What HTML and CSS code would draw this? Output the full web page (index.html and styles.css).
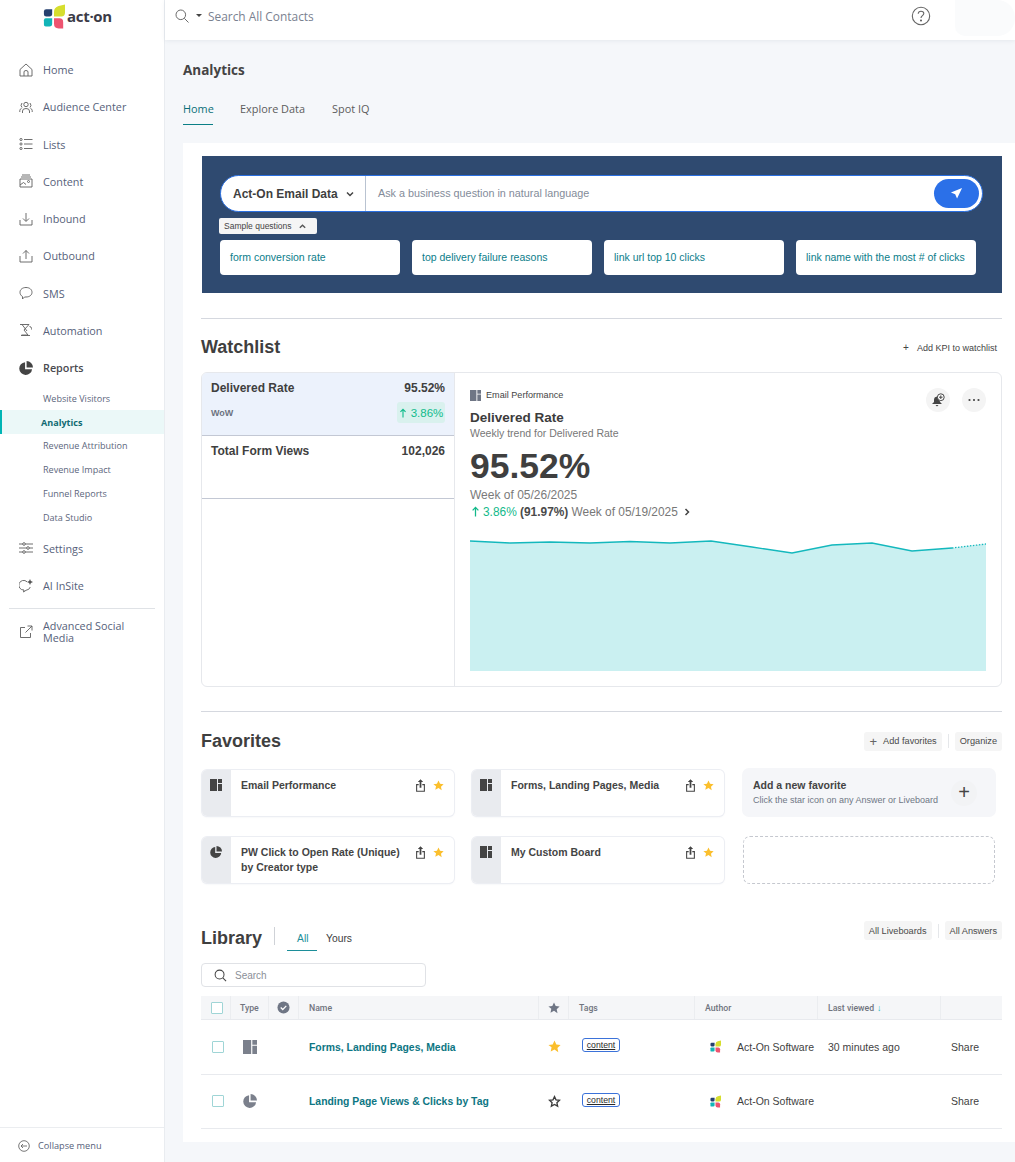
FILE: index.html
```html
<!DOCTYPE html>
<html lang="en">
<head>
<meta charset="utf-8">
<title>Analytics</title>
<link rel="stylesheet" href="styles.css">
</head>
<body>
<svg class="defs" width="0" height="0" aria-hidden="true">
  <symbol id="logo" viewBox="0 0 24 26">
    <path fill="#26406f" d="M1 7.500Q1 5 3.500 5H10v5q0 3-3 3H3.500Q1 13 1 10.500z"/>
    <path fill="#12b5b8" d="M3 15h7v6q0 3-3 3H3q-2 0-2-2v-5q0-2 2-2z"/>
    <path fill="#d6de2e" d="M24 0v9q0 4-4 4h-8V8q0-5 5-6.500z"/>
    <path fill="#ee5470" d="M12 15h6q4 0 4 4v7h-5q-5 0-5-5z"/>
  </symbol>
  <symbol id="board" viewBox="0 0 12 12">
    <path fill="currentColor" d="M0 0h7v12H0zM8 0h4v4H8zM8 5h4v7H8z"/>
  </symbol>
  <symbol id="pie" viewBox="0 0 12 12">
    <path fill="currentColor" d="M5.200 1v6h6A5.500 5.500 0 1 1 5.200 1zM6.500 0a5.500 5.500 0 0 1 5.500 5.500H6.500z"/>
  </symbol>
  <symbol id="star" viewBox="0 0 12 12">
    <path fill="currentColor" d="M6 .5l1.700 3.600 3.900.5-2.900 2.700.8 3.900L6 8.800l-3.500 1.900.8-3.900L.4 4.600l3.900-.5z"/>
  </symbol>
  <symbol id="share" viewBox="0 0 10 14">
    <path fill="none" stroke="currentColor" stroke-width="1.200" d="M3 6H.7v7.300h8.600V6H7"/>
    <path fill="currentColor" d="M5 0l3 3.200H6V9.500H4V3.200H2z"/>
  </symbol>
  <symbol id="chev" viewBox="0 0 10 10">
    <path fill="none" stroke="currentColor" stroke-width="1.500" d="M2 3.500l3 3 3-3"/>
  </symbol>
  <symbol id="uparrow" viewBox="0 0 10 12">
    <path fill="none" stroke="currentColor" stroke-width="1.400" d="M5 11.500V1.500M1.800 4.700L5 1.500l3.200 3.200"/>
  </symbol>
</svg>

<div class="app">
  <aside class="sidebar">
    <div class="brand">
      <svg class="brand-mark"><use href="#logo"/></svg>
      <span class="brand-text">act·on</span>
    </div>
    <nav class="nav">
      <a class="nav-item"><svg class="nav-icon" viewBox="0 0 14 14"><path d="M1 6.500L7 1l6 5.500V13H1zM5 13V9q0-1.500 2-1.500T9 9v4"/></svg>Home</a>
      <a class="nav-item"><svg class="nav-icon" viewBox="0 0 14 14"><circle cx="7" cy="4.500" r="2.200"/><path d="M3.500 13v-2q0-2.500 3.500-2.500t3.500 2.500v2M3 7.500Q1 5.500 3 3M11 7.500q2-2 0-4.500M.8 12v-1.500Q.8 9 2.500 8.500M13.200 12v-1.500Q13.200 9 11.500 8.500"/></svg>Audience Center</a>
      <a class="nav-item"><svg class="nav-icon" viewBox="0 0 14 14"><circle cx="2" cy="2.500" r="1.100"/><circle cx="2" cy="7" r="1.100"/><circle cx="2" cy="11.500" r="1.100"/><path d="M5 2.500h8.500M5 7h8.500M5 11.500h8.500"/></svg>Lists</a>
      <a class="nav-item"><svg class="nav-icon" viewBox="0 0 14 14"><path d="M3 1h8M2 3h10M1 5h12v8H1zM1 11l3.500-2.500L7 10.500"/><circle cx="9.500" cy="7.500" r="1"/></svg>Content</a>
      <a class="nav-item"><svg class="nav-icon" viewBox="0 0 14 14"><path d="M1 8v5h12V8M7 1v8M4 6.500L7 9.500l3-3"/></svg>Inbound</a>
      <a class="nav-item"><svg class="nav-icon" viewBox="0 0 14 14"><path d="M1 7v6h12V7M7 10V1.500M4 4.500l3-3 3 3"/></svg>Outbound</a>
      <a class="nav-item"><svg class="nav-icon" viewBox="0 0 14 14"><path d="M7 1.500c3.500 0 6 2 6 4.800S10.500 11 7 11H5.500L3.500 13v-2.500C2 9.700 1 8.200 1 6.300 1 3.500 3.500 1.500 7 1.500z"/></svg>SMS</a>
      <a class="nav-item"><svg class="nav-icon" viewBox="0 0 14 14"><path d="M1 1.500h9L5 7l4 5H2.500M3 1.500L8 8M2 12.500h9M10.500 3.500q2 0 2 2v1"/></svg>Automation</a>
      <a class="nav-item nav-strong"><svg class="nav-icon nav-solid" viewBox="0 0 12 12"><use href="#pie"/></svg>Reports</a>
      <div class="subnav">
        <a class="sub-item">Website Visitors</a>
        <a class="sub-item sub-active">Analytics</a>
        <a class="sub-item">Revenue Attribution</a>
        <a class="sub-item">Revenue Impact</a>
        <a class="sub-item">Funnel Reports</a>
        <a class="sub-item">Data Studio</a>
      </div>
      <a class="nav-item"><svg class="nav-icon" viewBox="0 0 14 14"><path d="M0 3h14M0 7h14M0 11h14"/><circle class="knob" cx="5" cy="3" r="1.300"/><circle class="knob" cx="9" cy="7" r="1.300"/><circle class="knob" cx="5" cy="11" r="1.300"/></svg>Settings</a>
      <a class="nav-item"><svg class="nav-icon" viewBox="0 0 14 14"><path d="M8 2.800A4.800 4.800 0 1 0 5 11l-.5 2L7 11.300q3.500-.5 4.300-3.300"/><path class="filled" d="M11 0l.9 2.100L14 3l-2.100.9L11 6l-.9-2.100L8 3l2.100-.9z"/></svg>AI InSite</a>
      <div class="nav-rule"></div>
      <a class="nav-item nav-wrap"><svg class="nav-icon" viewBox="0 0 14 14"><path d="M6 2.500H1.500v10h10V8M8.500 1H13v4.500M13 1L6.500 7.500"/></svg><span>Advanced Social Media</span></a>
    </nav>
    <div class="collapse">
      <svg class="collapse-icon" viewBox="0 0 12 12"><circle cx="6" cy="6" r="5.300"/><path d="M9 6H3.200M5 4L3 6l2 2"/></svg>
      Collapse menu
    </div>
  </aside>

  <div class="main">
    <header class="topbar">
      <svg class="top-search" viewBox="0 0 14 14"><circle cx="5.800" cy="5.800" r="4.800"/><path d="M9.300 9.300L13.500 13.500"/></svg>
      <span class="caret"></span>
      <span class="top-placeholder">Search All Contacts</span>
      <svg class="help" viewBox="0 0 20 20"><circle cx="10" cy="10" r="8.700"/><path d="M7.200 7.800Q7.400 5.300 10 5.300q2.800 0 2.800 2.300c0 2-2.800 2.200-2.800 4.400"/><circle class="filled" cx="10" cy="14.500" r="1"/></svg>
      <div class="avatar"></div>
    </header>

    <div class="page-head">
      <h1 class="page-title">Analytics</h1>
      <div class="page-tabs">
        <a class="page-tab page-tab-active">Home</a>
        <a class="page-tab">Explore Data</a>
        <a class="page-tab">Spot IQ</a>
      </div>
    </div>

    <main class="card">
      <section class="hero">
        <div class="pill">
          <div class="pill-source">Act-On Email Data <svg class="pill-chev"><use href="#chev"/></svg></div>
          <div class="pill-input">Ask a business question in natural language</div>
          <div class="send"><svg viewBox="0 0 14 14" class="send-icon"><path d="M13 1L1 5.800l4.600 2 2 4.700z"/></svg></div>
        </div>
        <div class="sample-toggle">Sample questions <svg class="sample-chev"><use href="#chev"/></svg></div>
        <div class="chips">
          <a class="chip">form conversion rate</a>
          <a class="chip">top delivery failure reasons</a>
          <a class="chip">link url top 10 clicks</a>
          <a class="chip">link name with the most # of clicks</a>
        </div>
      </section>

      <div class="rule rule-first"></div>
      <div class="sec-head">
        <h2 class="sec-title">Watchlist</h2>
        <a class="kpi-add"><span class="kpi-plus">+</span>Add KPI to watchlist</a>
      </div>

      <section class="watch">
        <div class="watch-list">
          <div class="kpi kpi-active">
            <div class="kpi-row"><span>Delivered Rate</span><span>95.52%</span></div>
            <div class="kpi-sub"><span class="wow">WoW</span><span class="badge"><svg class="badge-arrow"><use href="#uparrow"/></svg>3.86%</span></div>
          </div>
          <div class="kpi">
            <div class="kpi-row"><span>Total Form Views</span><span>102,026</span></div>
          </div>
        </div>
        <div class="watch-detail">
          <div class="detail-actions">
            <span class="round"><svg viewBox="0 0 14 14" class="round-icon"><path class="filled" d="M6 3.500a3.500 3.500 0 0 0-3 3.500v2L1 11h10L9.500 9.500"/><circle class="bell-badge" cx="9.800" cy="4.200" r="3.400"/><path class="plus" d="M9.800 2.400v3.600M8 4.200h3.600"/><path class="filled" d="M4.500 12h3L6 13.500z"/></svg></span>
            <span class="round"><svg viewBox="0 0 14 14" class="round-icon"><circle class="filled" cx="2.500" cy="7" r="1.100"/><circle class="filled" cx="7" cy="7" r="1.100"/><circle class="filled" cx="11.500" cy="7" r="1.100"/></svg></span>
          </div>
          <div class="board-line"><svg class="board-ic"><use href="#board"/></svg>Email Performance</div>
          <div class="detail-title">Delivered Rate</div>
          <div class="detail-sub">Weekly trend for Delivered Rate</div>
          <div class="detail-num">95.52%</div>
          <div class="detail-week">Week of 05/26/2025</div>
          <div class="detail-cmp"><svg class="cmp-arrow"><use href="#uparrow"/></svg><span class="up">3.86%</span> <b>(91.97%)</b> Week of 05/19/2025 <svg class="cmp-chev"><use href="#chev"/></svg></div>
          <svg class="chart" viewBox="0 0 516 131" preserveAspectRatio="none">
            <path fill="#caf0f1" d="M0 1L40 3 80 2 120 3 160 1.500 200 3 241 1 282 7 322 13 362 5 402 3 442 11 482 8 516 4V131H0z"/>
            <path fill="none" stroke="#14b8bd" stroke-width="1.300" d="M0 1L40 3 80 2 120 3 160 1.500 200 3 241 1 282 7 322 13 362 5 402 3 442 11 482 8"/>
            <path fill="none" stroke="#14b8bd" stroke-width="1.300" stroke-dasharray="1.500 1.500" d="M482 8L516 4"/>
          </svg>
        </div>
      </section>

      <div class="rule rule-second"></div>
      <div class="sec-head fav-head">
        <h2 class="sec-title">Favorites</h2>
        <div class="btn-group">
          <a class="soft-btn"><span class="btn-plus">+</span>Add favorites</a>
          <span class="btn-sep"></span>
          <a class="soft-btn">Organize</a>
        </div>
      </div>

      <section class="fav-grid">
        <article class="fav">
          <div class="fav-side"><svg class="fav-type"><use href="#board"/></svg></div>
          <div class="fav-name">Email Performance</div>
          <svg class="fav-share"><use href="#share"/></svg><svg class="fav-star"><use href="#star"/></svg>
        </article>
        <article class="fav">
          <div class="fav-side"><svg class="fav-type"><use href="#board"/></svg></div>
          <div class="fav-name">Forms, Landing Pages, Media</div>
          <svg class="fav-share"><use href="#share"/></svg><svg class="fav-star"><use href="#star"/></svg>
        </article>
        <article class="fav-new">
          <div class="new-copy">
            <div class="new-title">Add a new favorite</div>
            <div class="new-sub">Click the star icon on any Answer or Liveboard</div>
          </div>
          <span class="new-plus">+</span>
        </article>
        <article class="fav">
          <div class="fav-side"><svg class="fav-type"><use href="#pie"/></svg></div>
          <div class="fav-name">PW Click to Open Rate (Unique) by Creator type</div>
          <svg class="fav-share"><use href="#share"/></svg><svg class="fav-star"><use href="#star"/></svg>
        </article>
        <article class="fav">
          <div class="fav-side"><svg class="fav-type"><use href="#board"/></svg></div>
          <div class="fav-name">My Custom Board</div>
          <svg class="fav-share"><use href="#share"/></svg><svg class="fav-star"><use href="#star"/></svg>
        </article>
        <div class="fav-empty"></div>
      </section>

      <div class="lib-head">
        <h2 class="sec-title lib-title">Library</h2>
        <span class="lib-sep"></span>
        <div class="lib-tabs">
          <a class="lib-tab lib-tab-active">All</a>
          <a class="lib-tab">Yours</a>
        </div>
        <div class="btn-group lib-btns">
          <a class="soft-btn">All Liveboards</a>
          <span class="btn-sep"></span>
          <a class="soft-btn">All Answers</a>
        </div>
      </div>

      <div class="lib-search">
        <svg class="lib-search-ic" viewBox="0 0 14 14"><circle cx="6" cy="6" r="4.800"/><path d="M9.500 9.500L13 13"/></svg>
        Search
      </div>

      <section class="table">
        <div class="tr th">
          <div class="td"><span class="check check-head"></span></div>
          <div class="td td-l td-type">Type</div>
          <div class="td"><svg class="verified" viewBox="0 0 14 14"><circle cx="7" cy="7" r="6.500"/><path d="M4 7l2.200 2.200L10 5.300"/></svg></div>
          <div class="td td-l">Name</div>
          <div class="td"><svg class="head-star"><use href="#star"/></svg></div>
          <div class="td td-l">Tags</div>
          <div class="td td-l">Author</div>
          <div class="td td-l">Last viewed <span class="sort">↓</span></div>
          <div class="td"></div>
        </div>
        <div class="tr row">
          <div class="td"><span class="check"></span></div>
          <div class="td"><svg class="row-type"><use href="#board"/></svg></div>
          <div class="td"></div>
          <div class="td td-l row-name">Forms, Landing Pages, Media</div>
          <div class="td"><svg class="row-star"><use href="#star"/></svg></div>
          <div class="td td-l"><a class="tag">content</a></div>
          <div class="td td-author"><svg class="author-logo"><use href="#logo"/></svg>Act-On Software</div>
          <div class="td td-l">30 minutes ago</div>
          <div class="td td-l">Share</div>
        </div>
        <div class="tr row">
          <div class="td"><span class="check"></span></div>
          <div class="td"><svg class="row-type"><use href="#pie"/></svg></div>
          <div class="td"></div>
          <div class="td td-l row-name">Landing Page Views &amp; Clicks by Tag</div>
          <div class="td"><svg class="row-star row-star-off" viewBox="0 0 12 12"><path d="M6 1.500l1.400 3 3.200.4-2.400 2.200.7 3.200L6 8.700l-2.900 1.600.7-3.200-2.400-2.200 3.200-.4z"/></svg></div>
          <div class="td td-l"><a class="tag">content</a></div>
          <div class="td td-author"><svg class="author-logo"><use href="#logo"/></svg>Act-On Software</div>
          <div class="td td-l"></div>
          <div class="td td-l">Share</div>
        </div>
      </section>
    </main>
  </div>
</div>
</body>
</html>
```

FILE: styles.css
```css
* { box-sizing: border-box; }
html, body { margin: 0; padding: 0; height: 100%; }
body {
  font-family: "Liberation Sans", Arial, sans-serif;
  color: #3c3c3c;
  background: #f5f7fa;
  overflow: hidden;
}
a { color: inherit; text-decoration: none; }
h1, h2 { margin: 0; }
.defs { position: absolute; }

.app { display: flex; min-height: 1162px; }

/* Sidebar */
.sidebar {
  width: 165px;
  flex: none;
  height: 1162px;
  background: #fff;
  border-right: 1px solid #e9ecf0;
  display: flex;
  flex-direction: column;
  font-family: "Open Sans", sans-serif;
}
.brand { height: 51px; padding: 4px 0 0 43px; display: flex; align-items: flex-start; }
.brand-mark { width: 22px; height: 25px; flex: none; }
.brand-text {
  margin: 2px 0 0 2px;
  font-family: "Open Sans", sans-serif;
  font-size: 15px;
  font-weight: 700;
  line-height: 20px;
  color: #3b3b47;
  letter-spacing: -.3px;
}
.nav { display: flex; flex-direction: column; }
.nav-item {
  height: 37.280px;
  display: flex;
  align-items: center;
  padding-left: 19px;
  font-size: 10.800px;
  color: #56617a;
}
.nav-strong { color: #4a4a50; font-weight: 600; }
.nav-icon {
  width: 14px;
  height: 14px;
  margin-right: 10px;
  flex: none;
  fill: none;
  stroke: #5d5d5d;
  stroke-width: .9;
}
.nav-solid { fill: #444; stroke: none; color: #444; }
.knob { fill: #fff; }
.filled { fill: #555; stroke: none; }
.subnav { display: flex; flex-direction: column; margin-bottom: .5px; }
.sub-item {
  height: 23.800px;
  display: flex;
  align-items: center;
  padding-left: 43px;
  font-size: 9.050px;
  color: #5c667c;
}
.sub-active {
  padding-left: 39px;
  border-left: 2px solid #00b5b5;
  background: #ebf8f8;
  color: #0f6a72;
  font-weight: 700;
}
.nav-rule { height: 1px; background: #dfe2e6; margin: 4px 9px; }
.nav-wrap { height: 38px; }
.nav-wrap span { line-height: 12px; width: 100px; }
.collapse {
  margin-top: auto;
  height: 35px;
  border-top: 1px solid #ebedf0;
  display: flex;
  align-items: center;
  padding: 1px 0 0 18px;
  font-size: 9.200px;
  color: #56617a;
}
.collapse-icon { width: 12px; height: 12px; margin-right: 8px; fill: none; stroke: #555; stroke-width: .8; }

/* Top bar */
.main { flex: 1; min-width: 0; }
.topbar {
  height: 40px;
  background: #fff;
  display: flex;
  align-items: flex-start;
  padding: 9px 0 0 10px;
  box-shadow: 0 1px 4px rgba(90, 105, 130, .1);
  font-family: "Open Sans", sans-serif;
}
.top-search { width: 14px; height: 14px; fill: none; stroke: #6b6b6b; stroke-width: 1; }
.caret {
  width: 0; height: 0;
  margin: 5px 6px 0 7px;
  border: 3px solid transparent;
  border-top: 3px solid #444;
  border-bottom: 0;
}
.top-placeholder { font-size: 11.900px; line-height: 16px; margin-top: -1px; color: #7a8190; }
.help {
  width: 20px; height: 20px;
  margin-left: auto;
  margin-top: -3px;
  fill: none;
  stroke: #666;
  stroke-width: 1.100;
}
.avatar {
  width: 60px;
  height: 36px;
  margin: -9px 0 0 24px;
  background: #fafbfc;
  border-radius: 0 22px 22px 12px;
}

/* Page head */
.page-head { padding: 21px 0 0 18px; font-family: "Open Sans", sans-serif; }
.page-title { font-size: 13.500px; font-weight: 700; line-height: 18px; color: #444; }
.page-tabs { display: flex; gap: 27px; margin-top: 21px; height: 25px; }
.page-tab { font-size: 10.900px; line-height: 18px; color: #5c5c5c; font-weight: 500; }
.page-tab-active { color: #0b6f78; border-bottom: 1.500px solid #0b7f86; padding-bottom: 6px; width: 30px; }

/* Card */
.card {
  margin: 18px 0 0 18px;
  background: #fff;
  padding: 13px 13px 13px 18px;
  height: 999px;
}
.hero {
  margin-left: 1px;
  height: 137px;
  background: #2f4a70;
  padding: 19px 18px 0;
}
.pill {
  width: 763px;
  height: 37px;
  background: #fff;
  border: 1.500px solid #2a6fe0;
  border-radius: 19px;
  display: flex;
  align-items: center;
}
.pill-source {
  width: 145px;
  height: 100%;
  padding-left: 12px;
  display: flex;
  align-items: center;
  font-size: 12px;
  font-weight: 700;
  color: #3f3f3f;
  border-right: 1px solid #b9c3d1;
}
.pill-chev { width: 10px; height: 10px; margin-left: 7px; color: #444; }
.pill-input { flex: 1; padding: 0 0 1px 12px; font-size: 10.800px; color: #838b99; }
.send {
  width: 45px;
  height: 29px;
  margin-right: 3px;
  background: #2b70e8;
  border-radius: 15px;
  display: flex;
  align-items: center;
  justify-content: center;
}
.send-icon { width: 13px; height: 13px; fill: #fff; }
.sample-toggle {
  width: 98px;
  height: 16px;
  margin: 6px 0 0 -1px;
  background: #f5f5f5;
  border-radius: 2px;
  display: flex;
  align-items: center;
  padding-left: 5px;
  font-size: 8.500px;
  color: #444;
}
.sample-chev { width: 9px; height: 9px; margin-left: 6px; transform: rotate(180deg); color: #555; }
.chips { display: flex; gap: 12px; margin-top: 6px; }
.chip {
  width: 180px;
  height: 35px;
  background: #fff;
  border-radius: 4px;
  padding: 0 0 1px 10px;
  display: flex;
  align-items: center;
  font-size: 10.500px;
  color: #0b7d8a;
}

/* Sections */
.rule { height: 1px; background: #d5d8df; }
.rule-first { margin-top: 25px; }
.rule-second { margin-top: 24px; }
.sec-head { display: flex; justify-content: space-between; align-items: center; height: 24px; margin-top: 16px; }
.sec-title { font-size: 18px; font-weight: 700; color: #3f3f3f; line-height: 24px; }
.kpi-add { font-size: 9px; color: #444; padding-right: 5px; }
.kpi-plus { margin-right: 8px; font-size: 10px; }

/* Watchlist */
.watch {
  margin-top: 13px;
  height: 315px;
  border: 1px solid #e6e8ec;
  border-radius: 6px;
  display: flex;
  overflow: hidden;
}
.watch-list { width: 253px; flex: none; border-right: 1px solid #e6e8ec; }
.kpi { height: 63px; border-bottom: 1px solid #c3c8d4; padding: 8px 9px 0; }
.kpi-active { background: #ecf2fc; }
.kpi-row { display: flex; justify-content: space-between; font-size: 12px; font-weight: 700; line-height: 14px; color: #3f3f3f; }
.kpi-sub { display: flex; justify-content: space-between; align-items: center; margin-top: 7px; }
.wow { font-size: 9px; font-weight: 700; color: #6d7380; }
.badge {
  width: 48px;
  height: 21px;
  background: #d9f1ee;
  border-radius: 3px;
  font-size: 11.500px;
  display: flex;
  align-items: center;
  justify-content: center;
  color: #10bb8c;
}
.badge-arrow { width: 8px; height: 10px; margin-right: 4px; }
.watch-detail { flex: 1; padding: 16px 15px 0; position: relative; }
.detail-actions { position: absolute; top: 15px; right: 15px; display: flex; gap: 12px; }
.round {
  width: 24px; height: 24px;
  border-radius: 50%;
  background: #f4f4f4;
  display: flex;
  align-items: center;
  justify-content: center;
}
.round-icon { width: 14px; height: 14px; fill: none; stroke: none; }
.round-icon .filled { fill: #444; }
.bell-badge { fill: #fff; stroke: #444; stroke-width: 1; }
.plus { stroke: #444; stroke-width: 1; fill: none; }
.board-line { display: flex; align-items: center; font-size: 9.100px; line-height: 12px; color: #444; }
.board-ic { width: 11px; height: 11px; margin-right: 5px; color: #6f7685; }
.detail-title { margin-top: 9px; font-size: 13.500px; font-weight: 700; line-height: 16px; color: #3c3c3c; }
.detail-sub { margin-top: 1px; font-size: 10.500px; line-height: 13px; color: #777; }
.detail-num { margin-top: 6px; font-size: 35.500px; font-weight: 700; line-height: 40px; color: #3f3f3f; }
.detail-week { margin-top: 2px; font-size: 12px; line-height: 14px; color: #7a7a7a; }
.detail-cmp { margin-top: 3px; font-size: 11.900px; line-height: 14px; color: #777; white-space: nowrap; }
.detail-cmp b { color: #4a4a4a; }
.up { color: #12b98a; }
.cmp-arrow { width: 9px; height: 11px; margin: 0 3px 0 1px; color: #12b98a; vertical-align: -1px; }
.cmp-chev { width: 10px; height: 10px; margin-left: 1px; color: #444; transform: rotate(-90deg); vertical-align: -1px; }
.chart { display: block; width: 516px; height: 131px; margin-top: 21px; }

/* Favorites */
.fav-head { margin-top: 17px; }
.btn-group { display: flex; align-items: center; }
.soft-btn {
  height: 19px;
  padding: 0 5px;
  background: #f5f5f5;
  border-radius: 3px;
  display: flex;
  align-items: center;
  font-size: 9.200px;
  color: #4a4a4a;
}
.btn-plus { font-size: 13px; margin: 0 6px 0 1px; color: #666; }
.btn-sep { width: 1px; height: 14px; background: #e5e7ea; margin: 0 6px; }
.fav-grid {
  display: grid;
  grid-template-columns: 252px 252px 252px;
  grid-auto-rows: 46px;
  column-gap: 18px;
  row-gap: 21px;
  margin: 17px 0 0 1px;
}
.fav {
  display: flex;
  align-items: flex-start;
  background: #fff;
  border-radius: 5px;
  box-shadow: 0 0 0 1px #eceef3, 0 1px 2px rgba(90, 100, 130, .12);
  overflow: hidden;
}
.fav-side {
  width: 29px;
  height: 100%;
  background: #e9ebef;
  flex: none;
  padding: 9px 0 0 8px;
}
.fav-type { display: block; width: 12px; height: 12px; color: #444; }
.fav-name {
  flex: 1;
  padding: 8px 10px 0 10px;
  font-size: 10.500px;
  font-weight: 700;
  line-height: 15px;
  color: #444;
}
.fav-share { width: 9px; height: 13px; margin: 9px 0 0; color: #444; flex: none; }
.fav-star { width: 11px; height: 11px; margin: 10px 10px 0 8px; color: #fbbf2d; flex: none; }
.fav-new {
  margin: -2px -2px -1px 0;
  border-radius: 7px;
  background: #f5f6f9;
  display: flex;
  align-items: center;
  justify-content: space-between;
  padding: 0 19px 0 11px;
}
.new-copy { margin-top: -1px; }
.new-title { font-size: 10.500px; font-weight: 700; line-height: 14px; color: #444; }
.new-sub { font-size: 9px; line-height: 12px; color: #6f7685; margin-top: 2px; }
.new-plus {
  width: 26px;
  height: 26px;
  border-radius: 50%;
  background: #f2f3f5;
  font-size: 20px;
  color: #444;
  line-height: 25px;
  text-align: center;
}
.fav-empty { border: 1px dashed #c5c8cf; border-radius: 7px; margin: -1px -1px -1px 1px; }

/* Library */
.lib-head { display: flex; align-items: flex-start; height: 31px; margin-top: 38px; }
.lib-title { margin-top: 5px; }
.lib-sep { width: 1px; height: 18px; background: #cfd2d7; margin: 6px 12px 0 12px; }
.lib-tabs { display: flex; margin-top: 9px; gap: 9px; }
.lib-tab { font-size: 10.300px; line-height: 18px; height: 21px; padding: 0; color: #3c3c3c; }
.lib-tab-active { color: #1c8e99; border-bottom: 1px solid #1c8e99; width: 30px; padding: 0 0 0 10px; }
.lib-btns { margin-left: auto; }
.lib-search {
  margin-top: 11px;
  width: 225px;
  height: 24px;
  border: 1px solid #e0e2e6;
  border-radius: 4px;
  display: flex;
  align-items: center;
  padding-left: 12px;
  font-size: 10px;
  color: #8b8f98;
}
.lib-search-ic { width: 13px; height: 13px; margin-right: 8px; fill: none; stroke: #444; stroke-width: 1.100; }

/* Table */
.table { margin-top: 9px; }
.tr {
  display: grid;
  grid-template-columns: 30px 38px 30px 240px 30px 126px 123px 123px 61px;
  align-items: stretch;
}
.th {
  height: 24px;
  background: #f5f6f8;
  border-bottom: 1px solid #e8eaee;
  font-family: "Roboto", sans-serif;
  font-size: 8.700px;
  font-weight: 500;
  color: #70747e;
}
.th .td { border-right: 1px solid #ebedf0; }
.th .td:last-child { border-right: 0; }
.row {
  height: 54.500px;
  border-bottom: 1px solid #e8eaee;
  font-size: 10.500px;
  color: #3f3f3f;
}
.td { display: flex; align-items: center; justify-content: center; min-width: 0; }
.td-l { justify-content: flex-start; padding-left: 10px; }
.td-type { padding-left: 9px; }
.check { width: 12px; height: 12px; margin-left: 4px; border: 1px solid #9fd5d6; border-radius: 1px; background: #fff; }
.check-head { margin-left: 2px; }
.verified { width: 13px; height: 13px; fill: #6f7685; }
.verified path { fill: none; stroke: #fff; stroke-width: 1.300; }
.head-star { width: 12px; height: 12px; color: #6f7685; }
.sort { color: #20b9bd; margin-left: 3px; }
.row-type { width: 14px; height: 14px; color: #7b808c; }
.row-name { font-size: 10.400px; font-weight: 700; color: #0d7683; padding-top: 1px; }
.row-star { width: 13px; height: 13px; color: #fbbf2d; }
.row-star-off { fill: none; stroke: #3c3c3c; stroke-width: 1.200; }
.tag {
  margin: -3px 0 0 3px;
  width: 38px;
  height: 14px;
  border: 1px solid #3b72d9;
  border-radius: 3px;
  font-size: 8.700px;
  line-height: 12px;
  text-align: center;
  color: #2a2a2a;
  text-decoration: underline;
}
.td-author { justify-content: flex-start; padding-left: 15px; white-space: nowrap; }
.author-logo { width: 11px; height: 13px; margin-right: 16px; flex: none; }
```
